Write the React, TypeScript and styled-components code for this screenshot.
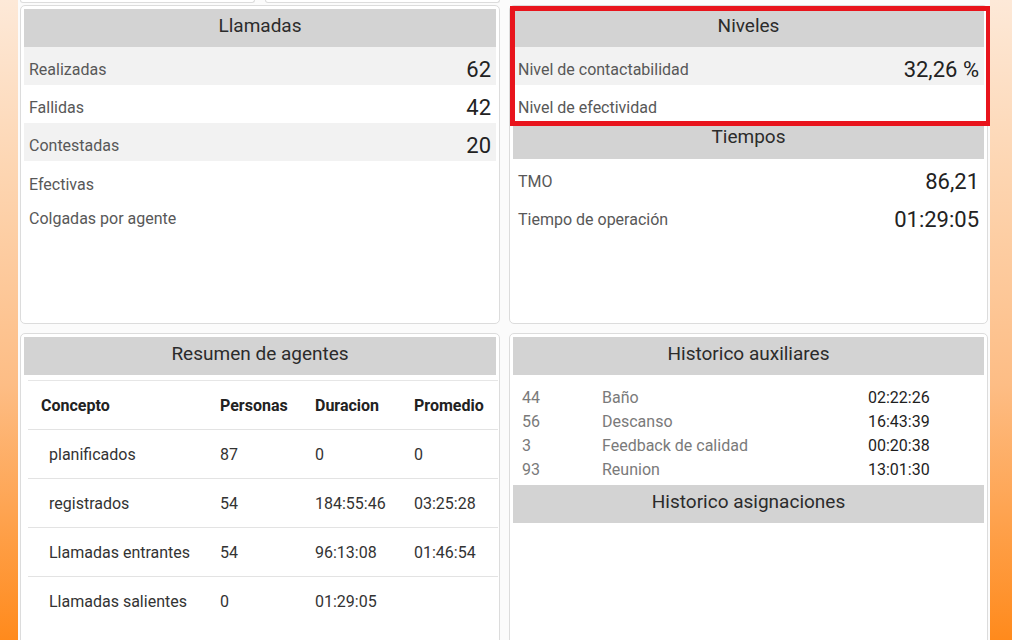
import React from "react";
import styled, { createGlobalStyle } from "styled-components";

const GlobalStyle = createGlobalStyle`
  html, body { margin: 0; padding: 0; }
  body {
    min-height: 640px;
    background: linear-gradient(180deg, #fde9d8 0%, #fdd3ad 30%, #fdbd85 60%, #ff8a1c 100%);
    font-family: Roboto, "Noto Sans", Arial, sans-serif;
    overflow: hidden;
  }
`;

const Wrapper = styled.div`
  margin-left: 18px;
  width: 972px;
  height: 640px;
  box-sizing: border-box;
  padding: 0 2px;
  background: #fbfbfb;
  display: flex;
  flex-direction: column;
  overflow: hidden;
`;

const StubRow = styled.div`
  display: grid;
  grid-template-columns: 480px 479px;
  column-gap: 9px;
  height: 3px;
  margin-bottom: 2px;
  flex-shrink: 0;
`;

const StubPair = styled.div`
  display: grid;
  grid-template-columns: 235px 235px;
  column-gap: 10px;
`;

const Stub = styled.div`
  border: 1px solid #dcdcdc;
  border-top: none;
  border-radius: 0 0 5px 5px;
  background: #fff;
`;

const CardRow = styled.div<{ $h: number }>`
  display: grid;
  grid-template-columns: 480px 479px;
  column-gap: 9px;
  height: ${(p) => p.$h}px;
  margin-bottom: 9px;
  flex-shrink: 0;
`;

const Card = styled.div`
  position: relative;
  background: #fff;
  border: 1px solid #dcdcdc;
  border-radius: 5px;
  padding: 3px;
  box-sizing: border-box;
`;

const Header = styled.div<{ $tight?: boolean }>`
  height: ${(p) => (p.$tight ? "36px" : "38px")};
  background: #d3d3d3;
  color: #2b2b2b;
  font-size: 19px;
  text-align: center;
  line-height: ${(p) => (p.$tight ? "28px" : "34px")};
`;

const StatRow = styled.div<{ $striped?: boolean; $compact?: boolean }>`
  display: flex;
  justify-content: space-between;
  align-items: center;
  box-sizing: border-box;
  height: ${(p) => (p.$compact ? "34px" : "38px")};
  margin-top: ${(p) => (p.$compact ? "3px" : "0")};
  padding: 6px 5px 0;
  background: ${(p) => (p.$striped ? "#f2f2f2" : "#fff")};
`;

const Label = styled.span`
  font-size: 16px;
  color: #585858;
`;

const Value = styled.span`
  font-size: 22px;
  color: #222;
`;

const Highlight = styled.div`
  position: absolute;
  top: 0;
  left: 0;
  width: 481px;
  height: 120px;
  border: 5px solid #e8141c;
  box-sizing: border-box;
  pointer-events: none;
`;

const Table = styled.div`
  margin: 5px -2px 0 4px;
  border-top: 1px solid #e6e6e6;
`;

const TRow = styled.div<{ $head?: boolean }>`
  display: grid;
  grid-template-columns: 179px 95px 99px 1fr;
  height: 48px;
  align-items: center;
  border-bottom: 1px solid #e3e3e3;
  font-size: 16px;
  font-weight: ${(p) => (p.$head ? 700 : 400)};
  color: ${(p) => (p.$head ? "#222" : "#333")};

  &:last-child {
    border-bottom-color: transparent;
  }
`;

const TCell = styled.div<{ $indent?: boolean }>`
  padding-left: ${(p) => (p.$indent ? "21px" : "13px")};
  white-space: nowrap;
`;

const HistList = styled.div`
  padding: 10px 0 4px 9px;
`;

const HistRow = styled.div`
  display: grid;
  grid-template-columns: 80px 266px 1fr;
  height: 24px;
  align-items: center;
  font-size: 16px;
`;

const HistMuted = styled.span`
  color: #7a7a7a;
`;

const HistTime = styled.span`
  color: #1e1e1e;
`;

const llamadas = [
  { l: "Realizadas", v: "62" },
  { l: "Fallidas", v: "42" },
  { l: "Contestadas", v: "20" },
];

const agentes = [
  ["planificados", "87", "0", "0"],
  ["registrados", "54", "184:55:46", "03:25:28"],
  ["Llamadas entrantes", "54", "96:13:08", "01:46:54"],
  ["Llamadas salientes", "0", "01:29:05", ""],
];

const auxiliares = [
  ["44", "Baño", "02:22:26"],
  ["56", "Descanso", "16:43:39"],
  ["3", "Feedback de calidad", "00:20:38"],
  ["93", "Reunion", "13:01:30"],
];

export default function App() {
  return (
    <>
      <GlobalStyle />
      <Wrapper>
        <StubRow>
          <StubPair>
            <Stub />
            <Stub />
          </StubPair>
          <div />
        </StubRow>

        <CardRow $h={319}>
          <Card>
            <Header>Llamadas</Header>
            {llamadas.map((r, i) => (
              <StatRow key={r.l} $striped={i % 2 === 0}>
                <Label>{r.l}</Label>
                <Value>{r.v}</Value>
              </StatRow>
            ))}
            <StatRow $compact>
              <Label>Efectivas</Label>
            </StatRow>
            <StatRow $compact style={{ marginTop: 0 }}>
              <Label>Colgadas por agente</Label>
            </StatRow>
          </Card>

          <Card>
            <Header>Niveles</Header>
            <StatRow $striped>
              <Label>Nivel de contactabilidad</Label>
              <Value>32,26 %</Value>
            </StatRow>
            <StatRow>
              <Label>Nivel de efectividad</Label>
            </StatRow>
            <Header $tight>Tiempos</Header>
            <StatRow>
              <Label>TMO</Label>
              <Value>86,21</Value>
            </StatRow>
            <StatRow>
              <Label>Tiempo de operación</Label>
              <Value>01:29:05</Value>
            </StatRow>
            <Highlight />
          </Card>
        </CardRow>

        <CardRow $h={320}>
          <Card>
            <Header>Resumen de agentes</Header>
            <Table>
              <TRow $head>
                <TCell>Concepto</TCell>
                <TCell>Personas</TCell>
                <TCell>Duracion</TCell>
                <TCell>Promedio</TCell>
              </TRow>
              {agentes.map((a) => (
                <TRow key={a[0]}>
                  <TCell $indent>{a[0]}</TCell>
                  <TCell>{a[1]}</TCell>
                  <TCell>{a[2]}</TCell>
                  <TCell>{a[3]}</TCell>
                </TRow>
              ))}
            </Table>
          </Card>

          <Card>
            <Header>Historico auxiliares</Header>
            <HistList>
              {auxiliares.map((a) => (
                <HistRow key={a[1]}>
                  <HistMuted>{a[0]}</HistMuted>
                  <HistMuted>{a[1]}</HistMuted>
                  <HistTime>{a[2]}</HistTime>
                </HistRow>
              ))}
            </HistList>
            <Header>Historico asignaciones</Header>
          </Card>
        </CardRow>
      </Wrapper>
    </>
  );
}
